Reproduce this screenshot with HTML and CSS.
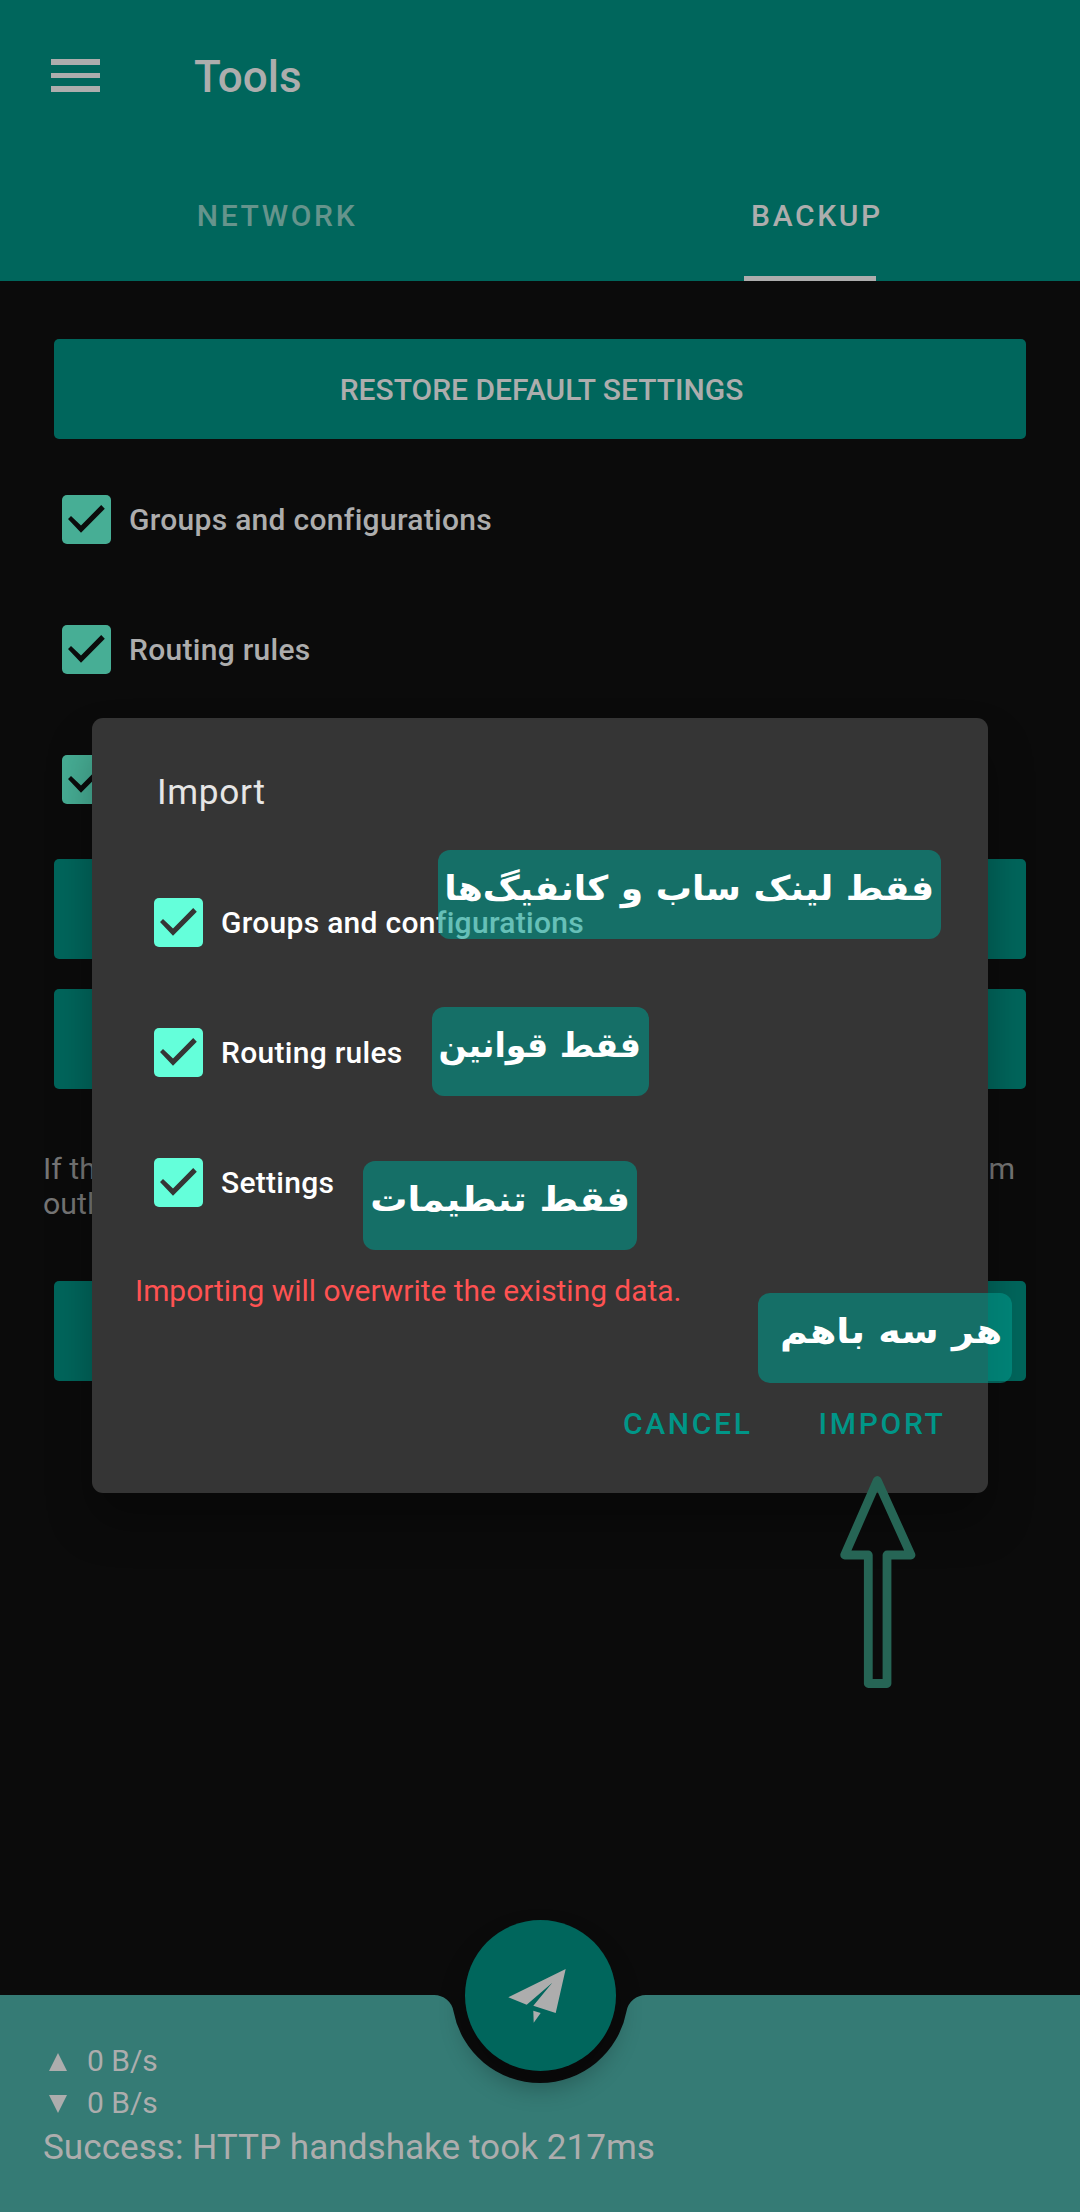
FILE: index.html
```html
<!DOCTYPE html>
<html lang="en">
<head>
<meta charset="utf-8">
<title>Tools</title>
<link rel="stylesheet" href="styles.css">
</head>
<body>
<svg class="defs" width="0" height="0">
  <defs>
    <symbol id="check" viewBox="0 0 49 49">
      <path d="M6 24 9 21 19 30.5 39.2 10 42.8 13.7 19 37.8Z"/>
    </symbol>
  </defs>
</svg>
<div class="screen">
  <header class="appbar">
    <div class="toolbar">
      <div class="menu"><i></i><i></i><i></i></div>
      <h1 class="title">Tools</h1>
    </div>
    <nav class="tabs">
      <div class="tab"><span>NETWORK</span></div>
      <div class="tab active"><span>BACKUP</span></div>
    </nav>
  </header>

  <main class="content">
    <div class="button"><span>RESTORE DEFAULT SETTINGS</span></div>
    <div class="options">
      <div class="option"><svg class="box"><use href="#check"/></svg><span>Groups and configurations</span></div>
      <div class="option"><svg class="box"><use href="#check"/></svg><span>Routing rules</span></div>
      <div class="option"><svg class="box"><use href="#check"/></svg></div>
    </div>
    <div class="stack">
      <div class="button"></div>
      <div class="button"></div>
    </div>
    <div class="note">
      <div class="note-line"><span>If th</span><span>m</span></div>
      <div class="note-line"><span>outl</span></div>
    </div>
    <div class="button"></div>
  </main>

  <footer class="bottom">
    <svg class="cradle" width="1080" height="217" viewBox="0 1995 1080 217">
      <path d="M0 1995H434A19.8 19.8 0 0 1 453.5 2011.2A88 88 0 0 0 626.5 2011.2A19.8 19.8 0 0 1 646 1995H1080V2212H0Z"/>
    </svg>
    <div class="fab-glow"></div>
    <svg class="fab" width="151" height="151" viewBox="465 1920 151 151">
      <circle cx="540.5" cy="1995.5" r="75.5"/>
      <path d="M508.3 1997.3 565.7 1969 555.7 2013.1 533.3 2005.7 552.3 1982.7 526.7 2004.7ZM533.3 2010.7 540.7 2013 533.7 2022.7Z"/>
    </svg>
    <div class="stats">
      <div class="rate"><svg width="18" height="18"><path d="M9 0 18 18H0Z"/></svg><span>0 B/s</span></div>
      <div class="rate"><svg width="18" height="18"><path d="M0 0H18L9 18Z"/></svg><span>0 B/s</span></div>
      <div class="status"><span>Success: HTTP handshake took 217ms</span></div>
    </div>
  </footer>

  <section class="dialog">
    <h2 class="dialog-title"><span>Import</span></h2>
    <div class="options">
      <div class="option"><svg class="box"><use href="#check"/></svg><span>Groups and configurations</span></div>
      <div class="option"><svg class="box"><use href="#check"/></svg><span>Routing rules</span></div>
      <div class="option"><svg class="box"><use href="#check"/></svg><span>Settings</span></div>
    </div>
    <p class="warning"><span>Importing will overwrite the existing data.</span></p>
    <div class="actions"><span>CANCEL</span><span>IMPORT</span></div>
  </section>

  <div class="tag tag-groups" dir="rtl"><span>فقط لینک ساب و کانفیگ‌ها</span></div>
  <div class="tag tag-rules" dir="rtl"><span>فقط قوانین</span></div>
  <div class="tag tag-settings" dir="rtl"><span>فقط تنطیمات</span></div>
  <div class="tag tag-all" dir="rtl"><span>هر سه باهم</span></div>
  <svg class="arrow" width="80" height="220" viewBox="837 1470 80 220">
    <path d="M877.3 1480.5 911 1555H887V1683.5H868.3V1555H844.7Z"/>
  </svg>
</div>
</body>
</html>
```
FILE: styles.css
```css
* { box-sizing: border-box; margin: 0; padding: 0; }
body {
  background: #0b0b0b;
  color: #adadad;
  font: 400 30px/36px Roboto, "Liberation Sans", sans-serif;
}
.defs { position: absolute; }
.screen {
  position: relative;
  display: flex;
  flex-direction: column;
  width: 1080px;
  height: 2212px;
  overflow: hidden;
}
span { white-space: nowrap; }

.appbar { height: 281px; background: #00665c; }
.toolbar { display: flex; align-items: center; height: 151px; padding-left: 51px; }
.menu { display: flex; flex-direction: column; gap: 8px; width: 49px; }
.menu i { height: 5.7px; background: #adadad; }
.title { margin-left: 94px; font-size: 44px; line-height: 52px; font-weight: 500; padding-top: 3px; }
.tabs { display: grid; grid-template-columns: 1fr 1fr; height: 130px; }
.tab {
  display: flex;
  align-items: center;
  justify-content: center;
  padding: 0 0 0 14px;
  font-weight: 500;
  letter-spacing: 2.65px;
  color: #66948c;
}
.tab.active {
  color: #adadad;
  background: linear-gradient(#adadad, #adadad) 50% 100% / 132px 5px no-repeat;
}

.content { padding-top: 58px; }
.button {
  display: flex;
  align-items: center;
  justify-content: center;
  height: 100px;
  margin: 0 54px;
  padding: 2px 0 0 3px;
  border-radius: 5px;
  background: #00665c;
  font-weight: 500;
}
.content .options { margin: 15px 0 0 61.5px; }
.option { display: flex; align-items: center; gap: 18.5px; height: 130px; font-weight: 500; letter-spacing: .29px; }
.option span { padding-top: 1px; }
.box { width: 49px; height: 49px; border-radius: 5px; background: #47ae95; fill: #0b0b0b; }
.stack { display: flex; flex-direction: column; gap: 30px; margin-top: 15px; }
.note { height: 67px; margin: 62px 65px 63px 43px; color: #757575; line-height: 35px; font-size: 30.3px; }
.note-line { display: flex; justify-content: space-between; height: 35px; }

.bottom { position: relative; height: 217px; margin-top: auto; }
.cradle { display: block; position: absolute; inset: 0; fill: #357b75; }
.fab-glow {
  position: absolute;
  left: 465px;
  top: -75px;
  width: 151px;
  height: 151px;
  border-radius: 50%;
  box-shadow: 0 15px 26px rgba(0, 0, 0, .3);
}
.fab { position: absolute; left: 465px; top: -75px; fill: #adadad; }
.fab circle { fill: #00665c; }
.stats { position: relative; padding: 45px 0 0 43px; }
.rate { display: flex; align-items: center; gap: 20px; height: 42px; padding-left: 6px; }
.rate svg { fill: #adadad; margin-top: 1px; }
.status { font-size: 35.15px; line-height: 42px; padding-top: 2px; }

.dialog {
  position: absolute;
  left: 92px;
  top: 718px;
  width: 896px;
  height: 775px;
  border-radius: 11px;
  background: #353535;
  color: #fff;
  box-shadow: 0 28px 46px rgba(0, 0, 0, .3);
}
.dialog-title { padding: 53px 0 0 65px; font-size: 35.2px; line-height: 42px; font-weight: 400; color: #e6e6e6; height: 139px; letter-spacing: .7px; }
.dialog .options { margin-left: 61.5px; }
.dialog .box { background: #64ffda; fill: #353535; }
.warning { padding: 26px 0 0 43px; color: #ff5252; font-size: 29.9px; }
.actions {
  display: flex;
  justify-content: flex-end;
  gap: 66px;
  padding: 97px 42.5px 0 0;
  color: #009688;
  font-weight: 500;
  letter-spacing: 2.7px;
}

.tag {
  position: absolute;
  display: flex;
  justify-content: center;
  height: 89px;
  border-radius: 12px;
  background: rgba(0, 150, 136, .6);
  color: #fff;
  font: 700 34px/77px "DejaVu Sans", sans-serif;
}
.tag-groups { left: 438px; top: 850px; width: 503px; }
.tag-rules { left: 431.5px; top: 1007px; width: 217px; }
.tag-settings { left: 363px; top: 1161px; width: 274px; }
.tag-all { left: 758px; top: 1293px; width: 254px; height: 90px; padding-left: 12px; }
.tag-groups span { transform: scaleX(1.06); }
.tag-rules span { transform: scaleX(.975); }
.tag-settings span { transform: scaleX(1.09); }
.tag-all span { transform: scaleX(1.12); }
.arrow { position: absolute; left: 837px; top: 1470px; fill: none; stroke: #266555; stroke-width: 8.8; stroke-linejoin: round; }
```
